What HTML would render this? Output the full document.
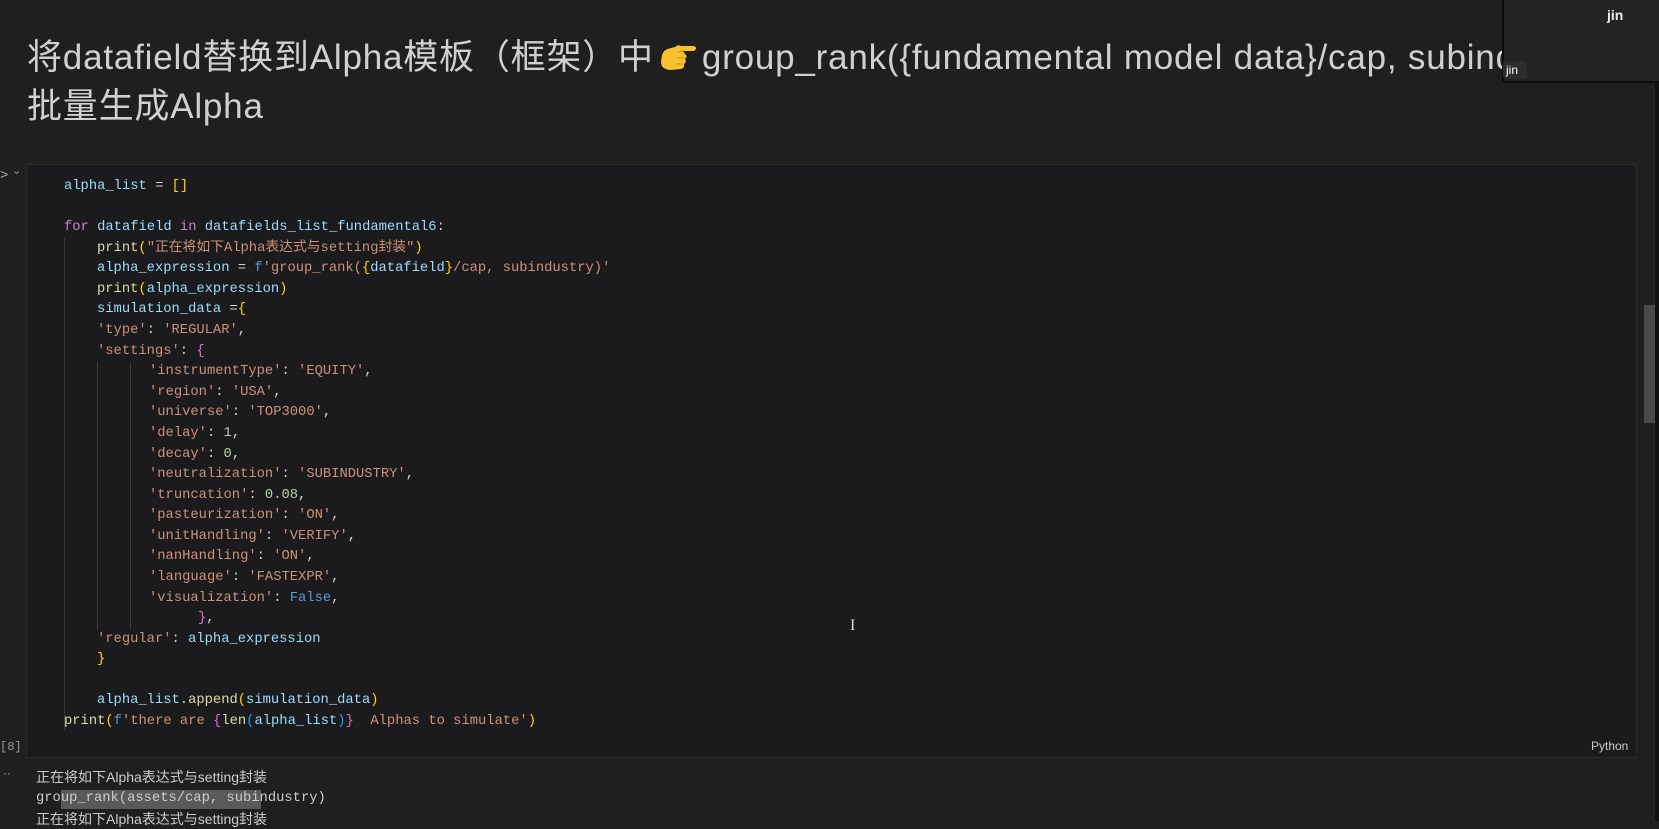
<!DOCTYPE html>
<html><head><meta charset="utf-8">
<style>
*{margin:0;padding:0;box-sizing:border-box}
body{width:1659px;height:821px;overflow:hidden;background:#1f1f20;position:relative;font-family:"Liberation Sans","Noto Sans CJK SC",sans-serif;color:#cccccc}
.title{position:absolute;left:27px;font-size:35px;letter-spacing:0.8px;line-height:49px;color:#d0d0d0;white-space:nowrap;font-family:"Liberation Sans","Noto Sans CJK SC",sans-serif}
.cell{position:absolute;left:26px;top:164px;width:1611px;height:594px;background:#1b1b1d;border:1px solid #2c2c2e}
.code{position:absolute;left:0;top:177px;font-family:"Liberation Mono",monospace;font-size:13.8px;line-height:20.58px;color:#d4d4d4}
.l{height:20.58px;position:relative;white-space:pre}
.v{color:#9cdcfe}.f{color:#dcdcaa}.k{color:#c586c0}.s{color:#ce9178}.y{color:#ffd700}.p{color:#da70d6}.b{color:#179fff}.n{color:#b5cea8}.c{color:#569cd6}
.g{position:absolute;width:1px;background:#3a3a3c}
.out{position:absolute;left:36px;font-size:13.8px;color:#cccccc;white-space:pre}
</style></head><body>
<div class="title" style="top:33px">将datafield替换到Alpha模板（框架）中<svg width="40" height="32" viewBox="0 0 40 32" style="vertical-align:-4px;margin:0 4px 0 4px"><path d="M4 14 Q6 8 13 7 L17 6 Q20 3 23 5 L36 5 Q40 7 36 10 L25 10 L27 13 Q30 15 27 18 Q29 21 26 23 Q27 27 23 28 L12 29 Q3 28 3 21 Z" fill="#f7c12f"/><path d="M25 10 L20 11 M26 17 L19 17 M25 23 L19 23" stroke="#d99a1a" stroke-width="1.5" fill="none"/></svg>group_rank({fundamental model data}/cap, subindustry)</div>
<div class="title" style="top:82px">批量生成Alpha</div>

<div style="position:absolute;left:1502px;top:0;width:157px;height:83px;background:#232324;border-left:2px solid #0c0c0c;border-bottom:2px solid #0c0c0c;z-index:5"></div>
<div style="position:absolute;left:1607px;top:7px;font-size:14px;font-weight:bold;color:#eee;z-index:6">jin</div>
<div style="position:absolute;left:1503px;top:61px;width:24px;height:18px;background:#2c2c2e;border-radius:3px;font-size:12px;color:#fff;padding-left:3px;line-height:18px;z-index:6">jin</div>

<div style="position:absolute;left:0;top:166px;font-size:14px;color:#aaa">&gt;</div>
<div style="position:absolute;left:12px;top:164px;font-size:11px;color:#999">&#8964;</div>

<div class="cell"></div>
<div style="position:absolute;left:1644px;top:305px;width:11px;height:118px;background:#4a4a4a"></div>
<div style="position:absolute;left:1655px;top:0;width:4px;height:821px;background:#111"></div>

<div class="g" style="left:64px;top:238px;height:492px"></div>
<div class="g" style="left:97px;top:362px;height:268px"></div>
<div class="g" style="left:130px;top:362px;height:268px"></div>

<div class="code"><div class="l" style="padding-left:64px"><span class="v">alpha_list</span> = <span class="y">[]</span></div><div class="l"></div><div class="l" style="padding-left:64px"><span class="k">for</span> <span class="v">datafield</span> <span class="k">in</span> <span class="v">datafields_list_fundamental6</span>:</div><div class="l" style="padding-left:97px"><span class="f">print</span><span class="y">(</span><span class="s" style="font-family:'Liberation Mono','Noto Sans CJK SC',monospace">"正在将如下Alpha表达式与setting封装"</span><span class="y">)</span></div><div class="l" style="padding-left:97px"><span class="v">alpha_expression</span> = <span class="c">f</span><span class="s">'group_rank(</span><span class="y">{</span><span class="v">datafield</span><span class="y">}</span><span class="s">/cap, subindustry)'</span></div><div class="l" style="padding-left:97px"><span class="f">print</span><span class="y">(</span><span class="v">alpha_expression</span><span class="y">)</span></div><div class="l" style="padding-left:97px"><span class="v">simulation_data</span> =<span class="y">{</span></div><div class="l" style="padding-left:97px"><span class="s">'type'</span>: <span class="s">'REGULAR'</span>,</div><div class="l" style="padding-left:97px"><span class="s">'settings'</span>: <span class="p">{</span></div><div class="l" style="padding-left:149px"><span class="s">'instrumentType'</span>: <span class="s">'EQUITY'</span>,</div><div class="l" style="padding-left:149px"><span class="s">'region'</span>: <span class="s">'USA'</span>,</div><div class="l" style="padding-left:149px"><span class="s">'universe'</span>: <span class="s">'TOP3000'</span>,</div><div class="l" style="padding-left:149px"><span class="s">'delay'</span>: <span class="n">1</span>,</div><div class="l" style="padding-left:149px"><span class="s">'decay'</span>: <span class="n">0</span>,</div><div class="l" style="padding-left:149px"><span class="s">'neutralization'</span>: <span class="s">'SUBINDUSTRY'</span>,</div><div class="l" style="padding-left:149px"><span class="s">'truncation'</span>: <span class="n">0.08</span>,</div><div class="l" style="padding-left:149px"><span class="s">'pasteurization'</span>: <span class="s">'ON'</span>,</div><div class="l" style="padding-left:149px"><span class="s">'unitHandling'</span>: <span class="s">'VERIFY'</span>,</div><div class="l" style="padding-left:149px"><span class="s">'nanHandling'</span>: <span class="s">'ON'</span>,</div><div class="l" style="padding-left:149px"><span class="s">'language'</span>: <span class="s">'FASTEXPR'</span>,</div><div class="l" style="padding-left:149px"><span class="s">'visualization'</span>: <span class="c">False</span>,</div><div class="l" style="padding-left:198px"><span class="p">}</span>,</div><div class="l" style="padding-left:97px"><span class="s">'regular'</span>: <span class="v">alpha_expression</span></div><div class="l" style="padding-left:97px"><span class="y">}</span></div><div class="l"></div><div class="l" style="padding-left:97px"><span class="v">alpha_list</span>.<span class="f">append</span><span class="y">(</span><span class="v">simulation_data</span><span class="y">)</span></div><div class="l" style="padding-left:64px"><span class="f">print</span><span class="y">(</span><span class="c">f</span><span class="s">'there are </span><span class="p">{</span><span class="f">len</span><span class="b">(</span><span class="v">alpha_list</span><span class="b">)</span><span class="p">}</span><span class="s">  Alphas to simulate'</span><span class="y">)</span></div></div>

<div style="position:absolute;left:850px;top:617px;font-size:16px;color:#ddd;font-family:'Liberation Serif',serif">I</div>
<div style="position:absolute;left:1591px;top:739px;font-size:12px;color:#ccc">Python</div>
<div style="position:absolute;left:0;top:740px;font-size:12px;color:#999;font-family:'Liberation Mono',monospace">[8]</div>
<div style="position:absolute;left:3px;top:766px;font-size:12px;color:#aaa">··</div>

<div class="out" style="top:767px;font-family:'Liberation Sans','Noto Sans CJK SC',sans-serif;font-size:14px">正在将如下Alpha表达式与setting封装</div>
<div style="position:absolute;left:61px;top:790px;width:200px;height:19px;background:#5a5a5a"></div>
<div class="out" style="top:791px;font-family:'Liberation Mono',monospace">group_rank(assets/cap, subindustry)</div>
<div class="out" style="top:809px;font-family:'Liberation Sans','Noto Sans CJK SC',sans-serif;font-size:14px">正在将如下Alpha表达式与setting封装</div>
</body></html>
